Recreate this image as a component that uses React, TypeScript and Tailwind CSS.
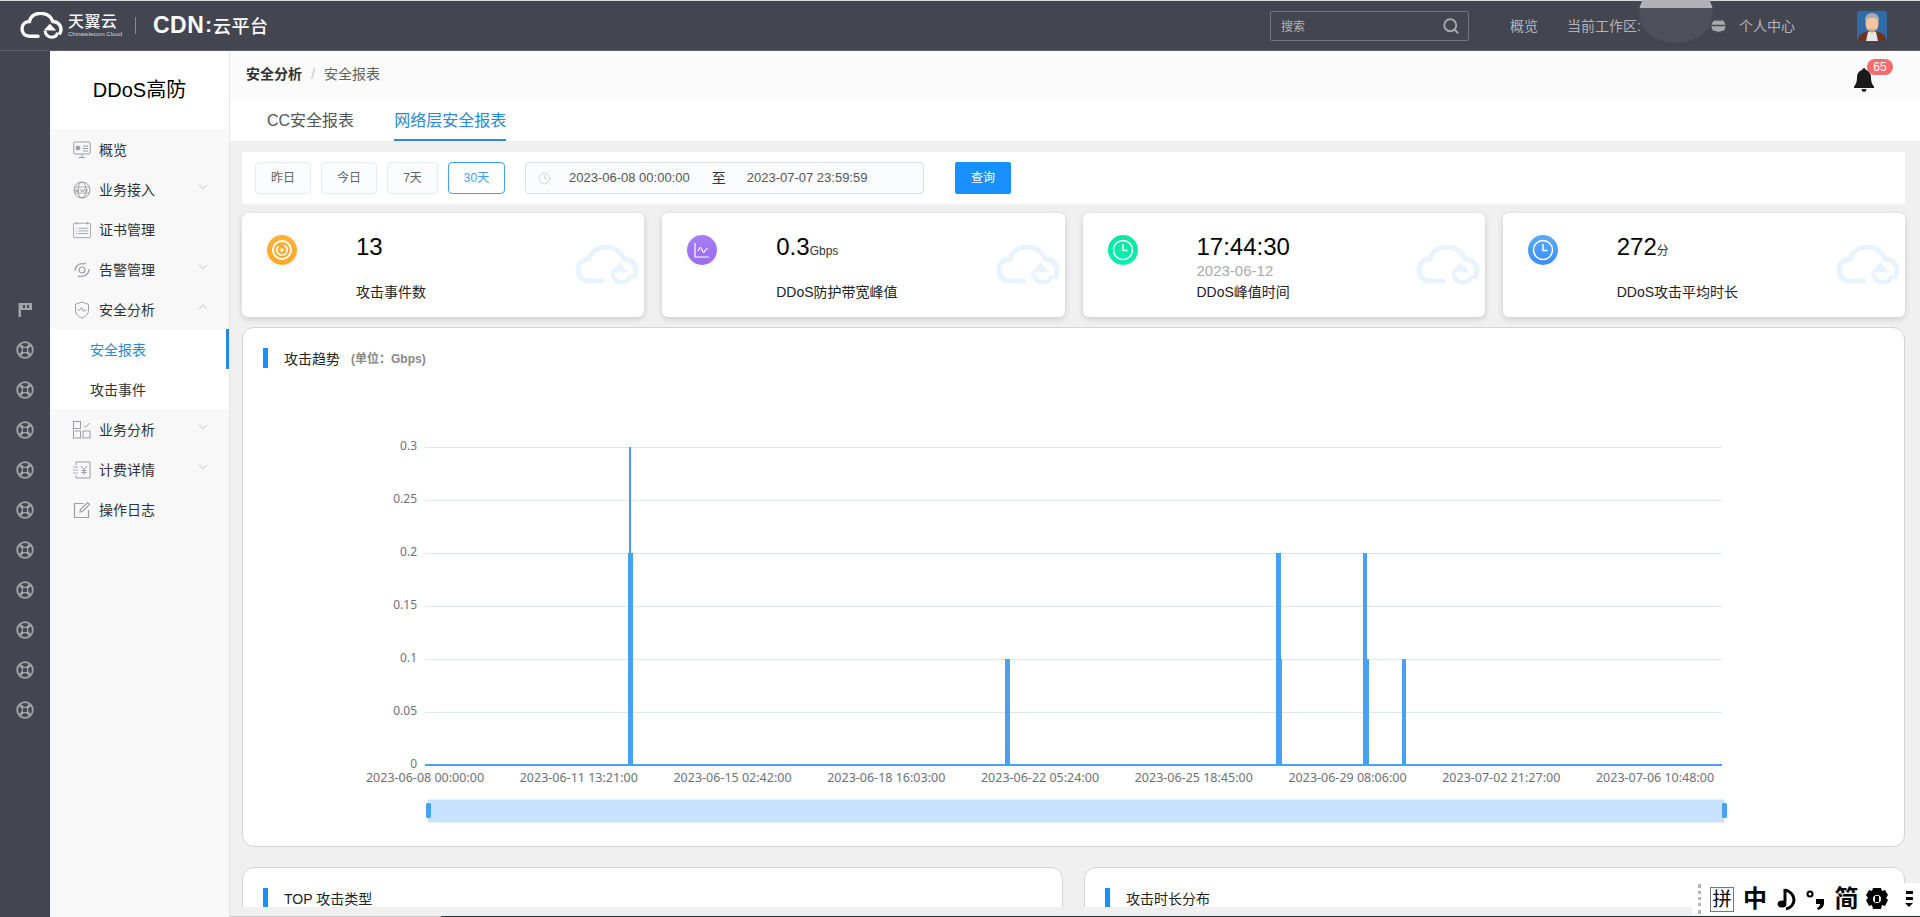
import React from "react";
import { ChevronDown, ChevronUp, Search, Clock3 } from "lucide-react";

const sans = `"Liberation Sans","Noto Sans CJK SC",sans-serif`;

const CloudLogo = ({ className }: { className?: string }) => (
  <svg viewBox="0 0 64 40" className={className} fill="none" stroke="currentColor">
    <path
      d="M27 36H14C7 36 3 31 3 25c0-6 4-11 11-11C16 6 23 2 31 2c9 0 15 5 18 12 7 0 12 5 12 12 0 2-.5 4-1.500 5.500"
      strokeWidth="5"
      strokeLinecap="round"
    />
    <path d="M37.500 28c0 5 4 9.500 9 9.500 5 0 8.500-3 9.500-7" strokeWidth="4.500" />
    <path d="M35 27.500 44.500 17.500 54 27.500z" fill="currentColor" stroke="none" />
  </svg>
);

const RailIcon = () => (
  <svg viewBox="0 0 18 18" className="w-[18px] h-[18px]" fill="none" stroke="#a3a4a8">
    <circle cx="9" cy="9" r="7.800" strokeWidth="1.800" />
    <path d="M4 4 14 14M14 4 4 14" strokeWidth="2.800" />
    <rect x="6.400" y="6.400" width="5.200" height="5.200" rx="1" fill="#434550" strokeWidth="1.200" />
  </svg>
);

const menuIcons: Record<string, React.ReactNode> = {
  overview: (
    <svg viewBox="0 0 18 18" className="w-[18px] h-[18px]" fill="none" stroke="#9a9da3" strokeWidth="1">
      <rect x="0.800" y="1" width="16.400" height="12" rx="1" />
      <path d="M6 16.500h6M9 13v3.500M10 5h5M10 7.500h5M10 10h5" />
      <circle cx="5" cy="7" r="2" fill="#9a9da3" />
    </svg>
  ),
  access: (
    <svg viewBox="0 0 18 18" className="w-[18px] h-[18px]" fill="none" stroke="#9a9da3" strokeWidth="1">
      <circle cx="9" cy="9" r="8" />
      <ellipse cx="9" cy="9" rx="4" ry="8" />
      <path d="M1.500 6h15M1.500 12h15M2 8l1 3 1-2.500 1 2.500 1-3M7.500 8l1 3 1-2.500 1 2.500 1-3M12.500 8l1 3 1-3" strokeWidth="0.800" />
    </svg>
  ),
  cert: (
    <svg viewBox="0 0 20 18" className="w-5 h-[18px]" fill="none" stroke="#9a9da3" strokeWidth="1">
      <rect x="0.500" y="1.500" width="19" height="16" rx="1" />
      <path d="M4 0v3M16 0v3M3 7h1M3 10h1M3 13h1M6 7h11M6 10h11M6 13h11" />
    </svg>
  ),
  alarm: (
    <svg viewBox="0 0 18 18" className="w-[18px] h-[18px]" fill="none" stroke="#9a9da3" strokeWidth="1.200">
      <circle cx="9" cy="9" r="3" />
      <path d="M2 10a7 7 0 0 1 9-7l2-1M16 8a7 7 0 0 1-9 7l-2 1" />
    </svg>
  ),
  safe: (
    <svg viewBox="0 0 18 18" className="w-[18px] h-[18px]" fill="none" stroke="#9a9da3" strokeWidth="1">
      <path d="M9 1l6.500 2.300v6.200c0 3.600-3 6-6.500 7.500-3.500-1.500-6.500-3.900-6.500-7.500V3.300z" />
      <path d="M4.500 9h2.500l1.500-2.500 2 4 1-1.500h2" />
    </svg>
  ),
  biz: (
    <svg viewBox="0 0 18 18" className="w-[18px] h-[18px]" fill="none" stroke="#9a9da3" strokeWidth="1">
      <rect x="0.500" y="0.500" width="7" height="7" />
      <rect x="0.500" y="10" width="7" height="7" />
      <rect x="10" y="10" width="7" height="7" />
      <path d="M10.500 4.500l2 2 4-4.500" />
    </svg>
  ),
  bill: (
    <svg viewBox="0 0 18 18" className="w-[18px] h-[18px]" fill="none" stroke="#9a9da3" strokeWidth="1">
      <path d="M3 4V1h14v16H3v-3" />
      <path d="M0 6h5M0 9h5M0 12h5" strokeWidth="0.800" />
      <path d="M8 5l3 3.500L14 5M11 8.500V14M8.500 9.500h5M8.500 11.500h5" />
    </svg>
  ),
  log: (
    <svg viewBox="0 0 18 18" className="w-[18px] h-[18px]" fill="none" stroke="#9a9da3" strokeWidth="1.200">
      <path d="M15.500 9v7.500h-14V2.500h9" />
      <path d="M7 11l.500-2.500L14.500 1.500l2 2L9.500 10.500z" />
    </svg>
  ),
};

const MenuRow = ({ icon, label, arrow }: { icon: string; label: string; arrow?: "up" | "down" }) => (
  <div className="h-10 flex items-center relative pl-[23px] pr-[19px] pt-[2px] text-[14px] text-[#303133]">
    <span className="w-[18px] flex justify-center shrink-0">{menuIcons[icon]}</span>
    <span className="ml-[8px] flex-1">{label}</span>
    {arrow === "down" && <ChevronDown className="w-[14px] h-[14px] text-[#a9abb0] -translate-y-[3px]" strokeWidth={1.200} />}
    {arrow === "up" && <ChevronUp className="w-[14px] h-[14px] text-[#a9abb0] -translate-y-[3px]" strokeWidth={1.200} />}
  </div>
);

const statIcons: Record<string, React.ReactNode> = {
  target: (
    <g fill="none" stroke="#fff">
      <circle cx="15" cy="15" r="9" strokeWidth="2" />
      <circle cx="15" cy="15" r="5.200" strokeWidth="1.600" strokeDasharray="20 6" />
      <circle cx="15" cy="15" r="1.800" fill="#fff" stroke="none" />
    </g>
  ),
  wave: (
    <g fill="none" stroke="#fff" strokeWidth="1.200">
      <path d="M8 8v14h14" />
      <path d="M10.500 16c1.500 0 1.500-3.500 3-3.500s1.500 5 3 5 1.500-3.500 3-3.500h1.500" />
    </g>
  ),
  clock: (
    <g fill="none" stroke="#fff" strokeWidth="1.500">
      <circle cx="15" cy="15" r="9.500" />
      <path d="M15 9v6.500h4.500" />
    </g>
  ),
};

const StatCard = ({
  icon,
  gradient,
  value,
  unit,
  date,
  label,
}: {
  icon: string;
  gradient: string;
  value: string;
  unit?: string;
  date?: string;
  label: string;
}) => (
  <div className="flex-1 h-[104px] bg-white rounded-[6px] shadow-[0_2px_6px_rgba(0,0,0,0.16)] relative overflow-hidden flex pl-[25px] pt-[22px]">
    <div className={`w-[30px] h-[30px] rounded-full shrink-0 shadow-[0_2px_5px_rgba(0,0,0,0.06)] ${gradient}`}>
      <svg viewBox="0 0 30 30" className="w-[30px] h-[30px]">
        {statIcons[icon]}
      </svg>
    </div>
    <div className="ml-[59px] text-black flex flex-col">
      <div className="h-[24px] leading-[24px] text-[24px] whitespace-nowrap">
        {value}
        {unit && <span className="text-[12px] text-[#333]">{unit}</span>}
      </div>
      <div className="h-[23px] leading-[23px] text-[15px] text-[#aaaaaa]">{date}</div>
      <div className="leading-[20px] text-[14px] text-[#222]">{label}</div>
    </div>
    <CloudLogo className="absolute right-[5px] top-[32px] w-[64px] h-[40px] text-[#e8f3fd]" />
  </div>
);

const spikes = [
  { x: 629, w: 2, top: 447 },
  { x: 628, w: 5, top: 553 },
  { x: 1005, w: 5, top: 659 },
  { x: 1276, w: 5, top: 553 },
  { x: 1276, w: 6, top: 659 },
  { x: 1363, w: 4, top: 553 },
  { x: 1363, w: 6, top: 659 },
  { x: 1402, w: 4, top: 659 },
];

const yTicks = ["0.3", "0.25", "0.2", "0.15", "0.1", "0.05", "0"];
const xTicks = [
  "2023-06-08 00:00:00",
  "2023-06-11 13:21:00",
  "2023-06-15 02:42:00",
  "2023-06-18 16:03:00",
  "2023-06-22 05:24:00",
  "2023-06-25 18:45:00",
  "2023-06-29 08:06:00",
  "2023-07-02 21:27:00",
  "2023-07-06 10:48:00",
];

// chart svg uses page coords, viewBox starts at panel left / y 380
const Chart = () => (
  <svg viewBox="243 380 1660 460" className="w-[1660px] h-[460px] block">
    {yTicks.map((t, i) => {
      const y = 447 + i * 53;
      return (
        <g key={t}>
          {i < 6 && <line x1="425" x2="1722" y1={y + 0.5} y2={y + 0.5} stroke="#e0e6f1" />}
          <text x="417" y={y + 3} textAnchor="end" fontSize="12" fill="#6e7079" fontFamily='"Noto Sans",sans-serif'>
            {t}
          </text>
        </g>
      );
    })}
    {spikes.map((s, i) => (
      <rect key={i} x={s.x} y={s.top} width={s.w} height={765 - s.top} fill="#47a2f6" />
    ))}
    <rect x="425" y="764" width="1297" height="2" fill="#47a2f6" />
    {xTicks.map((t, i) => (
      <text
        key={t}
        x={425 + i * 153.75}
        y="782"
        textAnchor="middle"
        fontSize="12.500"
        fill="#6e7079"
        fontFamily='"Noto Sans",sans-serif'
      >
        {t}
      </text>
    ))}
    <rect x="428" y="799.500" width="1296" height="23" fill="#c8e2fd" />
    <rect x="426" y="803" width="5" height="15" rx="1.500" fill="#47a2f6" />
    <rect x="1722" y="803" width="5" height="15" rx="1.500" fill="#47a2f6" />
  </svg>
);

const PanelTitle = ({ children }: { children: React.ReactNode }) => (
  <div className="flex items-center gap-[16px] h-[20px] pl-[20px]">
    <span className="w-[5px] h-[20px] bg-[#1890ff]" />
    <span className="flex items-center pt-[2px]">{children}</span>
  </div>
);

const App = () => {
  return (
    <div className="h-screen w-full flex flex-col overflow-hidden relative" style={{ fontFamily: sans }}>
      {/* Top bar */}
      <header className="h-[51px] shrink-0 bg-[#434550] border-t border-t-[#d9d9dc] border-b border-b-[#5c5e67] flex items-center relative">
        <CloudLogo className="ml-[20px] w-[43px] h-[27px] text-white" />
        <div className="ml-[5px] text-white flex flex-col -mt-[2px]">
          <span className="text-[16px] leading-[19px] font-medium tracking-[0.5px] text-[#f4f4f5]">天翼云</span>
          <span className="text-[6px] leading-[7px] text-[#d8d8da] whitespace-nowrap w-[50px]">Chinatelecom Cloud</span>
        </div>
        <span className="ml-[17px] w-px h-[17px] bg-[#8b8c93]" />
        <span className="ml-[17px] text-white text-[23px] font-bold leading-none tracking-[0.5px]">CDN</span>
        <span className="text-white text-[20px] font-bold leading-none ml-[1px] mr-[1px] -mt-[2px]">:</span>
        <span className="text-white text-[18px] font-medium leading-none tracking-[0.5px] pt-[2px]">云平台</span>

        <div className="ml-auto flex items-center">
          <div className="w-[199px] h-[30px] border border-[#74767e] rounded-[2px] flex items-center justify-between pl-[10px] pr-[8px] text-[12px] text-[#b3b4b8]">
            <span className="pt-[2px]">搜索</span>
            <Search className="w-[18px] h-[18px] text-[#a7a8ac]" strokeWidth={2.500} />
          </div>
          <span className="ml-[41px] pt-[2px] text-[14px] text-[#b3b4b8]">概览</span>
          <span className="ml-[29px] pt-[2px] text-[14px] text-[#b3b4b8] w-[144px]">当前工作区:</span>
          <svg viewBox="0 0 15 18" className="w-[15px] h-[18px] -mr-[1px] relative z-10">
            <circle cx="7.500" cy="9" r="7" fill="#a9aaae" />
            <path d="M1 8.500h13M3 14c3 2 6 2 9 0M4 3h7" stroke="#434550" strokeWidth="1.500" fill="none" />
          </svg>
          <span className="ml-[14px] pt-[2px] text-[14px] text-[#b3b4b8]">个人中心</span>
          <div className="ml-[62px] mr-[33px] w-[30px] h-[30px] rounded-[2px] bg-[#2f6ca8] overflow-hidden">
            <svg viewBox="0 0 30 30" className="w-[30px] h-[30px]">
              <path d="M1 30c0-6 3-8 8-9l6-1 6 1c5 1 8 3 8 9z" fill="#6d3322" />
              <path d="M9 30l2-9h8l2 9z" fill="#e6e6e6" />
              <ellipse cx="15" cy="13" rx="6.500" ry="8" fill="#f2c7a0" />
              <path d="M8 11c-1-7 4-9 7-9s8 2 7 9c-1-3-3-4-7-4s-6 1-7 4z" fill="#a8aaac" />
              <path d="M10.500 17c2 2 7 2 9 0-.5 3-2.500 4.500-4.500 4.500S11 20 10.500 17z" fill="#b9a591" />
            </svg>
          </div>
        </div>

        {/* blurred redaction over the workspace name */}
        <div className="absolute left-[1639px] -top-[18px] w-[74px] h-[60px] rounded-[50%] bg-[#4e505b] overflow-hidden">
          <div className="h-[25px] bg-[#b0b1b5]" />
        </div>
      </header>

      <div className="flex-1 flex min-h-0">
        {/* Icon rail */}
        <aside className="w-[50px] shrink-0 bg-[#434550] flex flex-col items-center pt-[239px]">
          <div className="h-10 flex items-center justify-center">
            <svg viewBox="0 0 16 16" className="w-4 h-4" fill="#a3a4a8">
              <path d="M1.500 1H15v7H4v7H1.500z" />
              <path d="M6 3h2v3H6zM10 3h2v3h-2z" fill="#434550" />
            </svg>
          </div>
          {Array.from({ length: 10 }).map((_, i) => (
            <div key={i} className="h-10 flex items-center justify-center">
              <RailIcon />
            </div>
          ))}
        </aside>

        {/* Sidebar */}
        <nav className="w-[180px] shrink-0 bg-[#f8f8f8] border-r border-[#e6e6e6] flex flex-col">
          <div className="h-[78px] bg-white flex items-center justify-center text-[20px] text-black">DDoS高防</div>
          <MenuRow icon="overview" label="概览" />
          <MenuRow icon="access" label="业务接入" arrow="down" />
          <MenuRow icon="cert" label="证书管理" />
          <MenuRow icon="alarm" label="告警管理" arrow="down" />
          <MenuRow icon="safe" label="安全分析" arrow="up" />
          <div className="bg-white text-[14px]">
            <div className="h-10 flex items-center pl-[40px] pt-[2px] text-[#2a87d9] relative">
              安全报表
              <span className="absolute right-0 top-0 w-[3px] h-10 bg-[#2a87d9]" />
            </div>
            <div className="h-10 flex items-center pl-[40px] pt-[2px] text-[#303133]">攻击事件</div>
          </div>
          <MenuRow icon="biz" label="业务分析" arrow="down" />
          <MenuRow icon="bill" label="计费详情" arrow="down" />
          <MenuRow icon="log" label="操作日志" />
        </nav>

        {/* Main */}
        <main className="flex-1 min-w-0 flex flex-col bg-[#f0f0f0]">
          <div className="h-[49px] shrink-0 bg-[#fbfbfb] flex items-center pl-[16px] pb-[2px] text-[14px] relative">
            <span className="font-bold text-[#303133]">安全分析</span>
            <span className="mx-[9px] text-[#c0c4cc]">/</span>
            <span className="text-[#606266]">安全报表</span>
            <div className="absolute left-[1624px] top-[17px]">
              <svg viewBox="0 0 20 24" className="w-5 h-6" fill="#1a1a1a">
                <path d="M10 0c1 0 1.500.8 1.500 1.800C15 2.800 17 5.500 17 9c0 4 .5 7 3 9.500V20H0v-1.500C2.500 16 3 13 3 9c0-3.500 2-6.200 5.500-7.200C8.500.8 9 0 10 0z" />
                <path d="M7.500 21h5c0 1.500-1 3-2.500 3s-2.500-1.500-2.500-3z" />
              </svg>
            </div>
            <span className="absolute left-[1637px] top-[8px] w-[26px] h-[16px] rounded-[8px] bg-[#f56c6c] text-white text-[12px] leading-[16px] text-center">
              65
            </span>
          </div>

          <div className="h-[41px] shrink-0 bg-white flex pl-[37px] text-[16px] gap-[40px]">
            <div className="h-full flex items-center pt-[2px] text-[#555] border-b-2 border-transparent">CC安全报表</div>
            <div className="h-full flex items-center pt-[2px] text-[#2a87d9] border-b-2 border-[#2a87d9]">网络层安全报表</div>
          </div>

          <div className="flex-1 min-h-0 overflow-hidden pt-[11px] pl-[12px] pr-[15px]">
            <div className="h-[52px] bg-white flex items-center pl-[13px] text-[12px]">
              <div className="flex gap-[10px]">
                <button className="w-[56px] h-[32px] rounded-[4px] border border-[#e6ebf0] bg-[#fafcfe] text-[#606266]">昨日</button>
                <button className="w-[56px] h-[32px] rounded-[4px] border border-[#e6ebf0] bg-[#fafcfe] text-[#606266]">今日</button>
                <button className="w-[51px] h-[32px] rounded-[4px] border border-[#e6ebf0] bg-[#fafcfe] text-[#606266]">7天</button>
                <button className="w-[57px] h-[32px] rounded-[4px] border border-[#409eff] bg-white text-[#409eff]">30天</button>
              </div>
              <div className="ml-[20px] w-[399px] h-[32px] rounded-[4px] border border-[#d8dfe8] bg-[#fafcfe] flex items-center text-[13px] text-[#555]">
                <Clock3 className="ml-[12px] w-[13px] h-[13px] text-[#c0c4cc]" strokeWidth={1.300} />
                <span className="ml-[18px] whitespace-nowrap">2023-06-08 00:00:00</span>
                <span className="ml-[22px] text-[14px] text-[#333]">至</span>
                <span className="ml-[21px] whitespace-nowrap">2023-07-07 23:59:59</span>
              </div>
              <button className="ml-[31px] w-[56px] h-[32px] rounded-[2px] bg-[#1890ff] text-white">查询</button>
            </div>

            <div className="mt-[9px] flex gap-[18px]">
              <StatCard icon="target" gradient="bg-gradient-to-b from-[#ffb03a] to-[#ffa726]" value="13" label="攻击事件数" />
              <StatCard icon="wave" gradient="bg-gradient-to-b from-[#a77cf5] to-[#9a6cf0]" value="0.3" unit="Gbps" label="DDoS防护带宽峰值" />
              <StatCard icon="clock" gradient="bg-gradient-to-b from-[#0ce6a0] to-[#00f0b0]" value="17:44:30" date="2023-06-12" label="DDoS峰值时间" />
              <StatCard icon="clock" gradient="bg-gradient-to-b from-[#5aaaf9] to-[#3a8ffa]" value="272" unit="分" label="DDoS攻击平均时长" />
            </div>

            <section className="mt-[10px] h-[520px] bg-white border border-[#d4d4d4] rounded-[12px] overflow-hidden pt-[20px]">
              <PanelTitle>
                <span className="text-[14px] text-[#222]">攻击趋势</span>
                <span className="ml-[11px] text-[12px] text-[#888] font-bold">(单位：Gbps)</span>
              </PanelTitle>
              <div className="mt-[12px]">
                <Chart />
              </div>
            </section>

            <div className="mt-[20px] flex gap-[21px]">
              <section className="flex-1 h-[100px] bg-white border border-[#d4d4d4] rounded-[12px] pt-[20px]">
                <PanelTitle>
                  <span className="text-[14px] text-[#222]">TOP 攻击类型</span>
                </PanelTitle>
              </section>
              <section className="flex-1 h-[100px] bg-white border border-[#d4d4d4] rounded-[12px] pt-[20px]">
                <PanelTitle>
                  <span className="text-[14px] text-[#222]">攻击时长分布</span>
                </PanelTitle>
              </section>
            </div>
          </div>
          <div className="h-[9px] shrink-0" />
          <div className="h-px shrink-0 flex">
            <div className="w-[211px] bg-[#c8c8c8]" />
            <div className="flex-1 bg-[#26302f]" />
          </div>
        </main>
      </div>

      {/* IME toolbar floating at the corner */}
      <div className="absolute right-0 bottom-[2px] w-[228px] h-[32px] bg-white flex items-center text-black font-bold leading-none">
        <span className="ml-[6px] w-[3px] h-[30px] border-l-[3px] border-dotted border-[#b5b5b5]" />
        <span className="ml-[9px] w-[24px] h-[25px] border border-[#777] text-[19px] font-normal flex items-center justify-center">拼</span>
        <span className="ml-[9px] w-[24px] text-[24px] text-center">中</span>
        <svg viewBox="0 0 20 24" className="ml-[9px] w-[20px] h-[24px]" fill="none" stroke="#000">
          <path d="M9 2v13" strokeWidth="3" />
          <path d="M9 3c5 1 9 5 9 10 0 4-3 8-8 9" strokeWidth="3" />
          <ellipse cx="6" cy="17" rx="4.500" ry="3.500" fill="#000" stroke="none" />
        </svg>
        <svg viewBox="0 0 20 24" className="ml-[10px] w-[20px] h-[24px]" fill="#000">
          <circle cx="4" cy="7" r="2.500" fill="none" stroke="#000" strokeWidth="2" />
          <path d="M10 12h8v4c0 4-3 6-6 7l-1-2c2-1 3-2 3-4h-4z" />
        </svg>
        <span className="ml-[8px] w-[25px] text-[24px] text-center">简</span>
        <svg viewBox="0 0 24 24" className="ml-[6px] w-[24px] h-[24px]" fill="#000">
          <path d="M8 1h8l1 3 3-1 3 5-2 3 2 2-3 6-3-1-1 4H8l-1-4-3 1-3-6 2-2-2-3 3-5 3 1z" />
          <circle cx="12" cy="12" r="4" fill="#fff" />
          <path d="M10 9h4v6h-4z" fill="#000" />
        </svg>
        <span className="ml-[16px] flex flex-col items-center gap-[3px]">
          <span className="w-[7px] h-[3px] bg-black" />
          <span className="w-[7px] h-[3px] bg-black" />
          <span className="w-0 h-0 border-x-[4px] border-x-transparent border-t-[4px] border-t-black" />
        </span>
      </div>
    </div>
  );
};

export default App;
